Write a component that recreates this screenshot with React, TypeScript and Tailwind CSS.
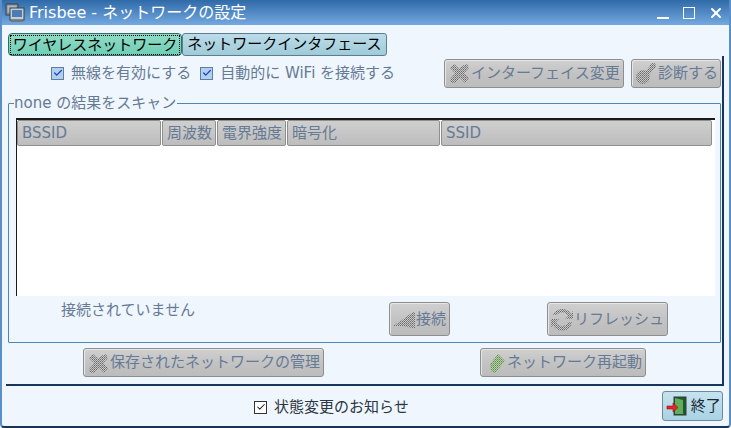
import React from 'react';
import { X, Check } from 'lucide-react';

const font = "font-['DejaVu_Sans','Noto_Sans_CJK_JP',sans-serif]";

const Hatch: React.FC<{ kind: 'tools' | 'tools2' | 'gear' | 'plug' | 'refresh' | 'arrow' }> = ({ kind }) => (
  <svg width="24" height="24" viewBox="0 0 24 24" className="shrink-0">
    <defs>
      <pattern id={`h-${kind}`} width="2" height="2" patternUnits="userSpaceOnUse">
        <rect width="2" height="2" fill={kind === 'arrow' ? '#b7d0a8' : '#c8c8c8'} />
        <rect width="1" height="1" fill={kind === 'arrow' ? '#5f8a55' : '#6a6a6a'} />
        <rect x="1" y="1" width="1" height="1" fill={kind === 'arrow' ? '#7fa36f' : '#858585'} />
      </pattern>
    </defs>
    {(kind === 'tools' || kind === 'tools2') && (
      <g fill={`url(#h-${kind})`}>
        <path d="M3 7 L7 3 L22 17 L18 22 Z" />
        <path d="M3 18 L15 5 L20 3 L22 7 L8 22 L4 22 Z" />
      </g>
    )}
    {kind === 'gear' && (
      <g fill={`url(#h-${kind})`}>
        <circle cx="9" cy="16" r="7" />
        <circle cx="19" cy="5" r="3" />
        <path d="M11 11 L16 5 L20 8 L14 15 Z" />
      </g>
    )}
    {kind === 'plug' && <path d="M1 19 L10 13 L21 5 L23 5 L23 21 L21 21 L10 19 Z" fill={`url(#h-${kind})`} />}
    {kind === 'refresh' && (
      <path
        d="M12 2 A10 10 0 0 1 21 7 L23 4 L23 12 L15 12 L18 9 A6.5 6.5 0 0 0 7 8 L3 8 A10 10 0 0 1 12 2 Z M1 12 L9 12 L6 15 A6.5 6.5 0 0 0 18 15 L22 15 A10 10 0 0 1 3 18 L1 21 Z"
        fill={`url(#h-${kind})`}
      />
    )}
    {kind === 'arrow' && <path d="M15 3 L22 10 L12 22 L8 20 L7 13 Z" fill={`url(#h-${kind})`} />}
  </svg>
);

const GrayButton: React.FC<{ label: string; icon: React.ReactNode; className: string }> = ({ label, icon, className }) => (
  <div
    className={`flex items-center rounded-[3px] border border-[#8e8e8e] bg-gradient-to-b from-[#d0d0d0] via-[#c3c3c3] to-[#bcbcbc] pl-[2px] text-[15px] text-[#667a94] shadow-[inset_1px_1px_0_#e6e6e6] ${className}`}
  >
    {icon}
    <span className="whitespace-nowrap">{label}</span>
  </div>
);

const Header: React.FC<{ label: string; className: string }> = ({ label, className }) => (
  <div
    className={`flex h-[26px] items-center rounded-[2px] border border-[#8f8f8f] bg-gradient-to-b from-[#cfcfcf] to-[#bdbdbd] pl-[4px] text-[15px] text-[#667a94] ${className}`}
  >
    <span className="whitespace-nowrap">{label}</span>
  </div>
);

const BlueCheck: React.FC = () => (
  <span className="flex h-[13px] w-[13px] items-center justify-center border border-[#5a7fa8] bg-[#b3cfe9]">
    <Check size={10} strokeWidth={3} className="text-[#1a3fd8]" />
  </span>
);

const App: React.FC = () => (
  <div className={`flex h-[428px] w-[731px] flex-col overflow-hidden rounded-b-[4px] border-x-2 border-b-2 border-x-[#5b8fc7] border-b-[#17365c] bg-[#eff6fe] ${font}`}>
    {/* Title bar */}
    <div className="-mx-[2px] flex h-[25px] shrink-0 items-center bg-gradient-to-b from-[#2f6aa8] to-[#74a9e0] pl-[5px] pr-[7px] text-white">
      <svg width="21" height="21" viewBox="0 0 21 21" className="shrink-0">
        <rect x="1" y="2" width="12" height="11" fill="#7f8c99" stroke="#39424c" />
        <rect x="2.5" y="3.5" width="9" height="7" fill="#aeb8c2" />
        <rect x="5" y="6" width="14" height="12" fill="#c4ccd4" stroke="#39424c" />
        <rect x="7" y="8" width="10" height="7" fill="#4b7cb4" />
        <rect x="6" y="18" width="12" height="2" fill="#6d7882" />
      </svg>
      <span className="ml-[3px] text-[16px] whitespace-nowrap">Frisbee - ネットワークの設定</span>
      <div className="ml-auto flex items-center">
        <span className="mt-[10px] h-[2px] w-[12px] bg-white" />
        <span className="ml-[14px] h-[12px] w-[12px] border-[1.5px] border-white" />
        <X size={16} strokeWidth={3} className="ml-[13px]" />
      </div>
    </div>

    <div className="flex flex-1 flex-col pl-[4px] pr-[5px]">
      {/* Tabs */}
      <div className="mt-[8px] ml-[2px] flex h-[23px] shrink-0 text-[15px] text-black">
        <div className="flex w-[174px] items-center justify-center rounded-[4px] border border-[#2d6f70] bg-gradient-to-b from-[#8fdcc6] to-[#6fcdb4]">
          <span className="whitespace-nowrap border border-dotted border-black px-[2px] leading-[18px]">ワイヤレスネットワーク</span>
        </div>
        <div className="flex w-[205px] items-center justify-center rounded-[3px] border border-[#5c7f90] bg-gradient-to-b from-[#bcdcea] to-[#9fcbd8]">
          <span className="whitespace-nowrap">ネットワークインタフェース</span>
        </div>
      </div>

      {/* Tab page */}
      <div className="flex h-[330px] shrink-0 flex-col border-r-2 border-b-2 border-r-[#17365c] border-b-[#17365c]">
        <div className="mt-[2px] flex h-[30px] shrink-0 items-center pr-[1px] text-[15px] text-[#667a94]">
          <div className="ml-[45px] flex items-center gap-[7px]">
            <BlueCheck />
            <span className="whitespace-nowrap">無線を有効にする</span>
          </div>
          <div className="ml-[9px] flex items-center gap-[7px]">
            <BlueCheck />
            <span className="whitespace-nowrap">自動的に WiFi を接続する</span>
          </div>
          <GrayButton label="インターフェイス変更" icon={<Hatch kind="tools" />} className="ml-auto h-[29px] w-[180px]" />
          <GrayButton label="診断する" icon={<Hatch kind="gear" />} className="ml-[7px] h-[29px] w-[90px]" />
        </div>

        {/* Group box */}
        <div className="relative mt-[15px] mr-[1px] ml-[2px] flex h-[240px] shrink-0 flex-col rounded-[1px] border border-[#4d87b8] pl-[7px] pr-[5px] pt-[14px]">
          <span className="absolute -top-[10px] left-[5px] whitespace-nowrap bg-[#eff6fe] pr-[1px] text-[15px] leading-[19px] text-[#667a94]">none の結果をスキャン</span>
          <div className="h-[178px] shrink-0 border-t-2 border-l border-t-[#1a1a1a] border-l-[#1a1a1a] bg-white pr-[3px]">
            <div className="flex gap-[1px]">
              <Header label="BSSID" className="w-[144px]" />
              <Header label="周波数" className="w-[54px]" />
              <Header label="電界強度" className="w-[69px]" />
              <Header label="暗号化" className="w-[153px]" />
              <Header label="SSID" className="flex-1" />
            </div>
          </div>
          <div className="flex flex-1 items-start pt-[6px]">
            <span className="ml-[45px] -mt-[1px] whitespace-nowrap text-[15px] leading-[18px] text-[#667a94]">接続されていません</span>
            <GrayButton label="接続" icon={<Hatch kind="plug" />} className="ml-[194px] h-[34px] w-[61px]" />
            <GrayButton label="リフレッシュ" icon={<Hatch kind="refresh" />} className="ml-[97px] h-[34px] w-[121px]" />
          </div>
        </div>

        <div className="mt-[5px] flex shrink-0">
          <GrayButton label="保存されたネットワークの管理" icon={<Hatch kind="tools2" />} className="ml-[77px] h-[29px] w-[241px]" />
          <GrayButton label="ネットワーク再起動" icon={<Hatch kind="arrow" />} className="ml-[156px] h-[29px] w-[166px]" />
        </div>
      </div>

      {/* Bottom row */}
      <div className="flex flex-1 items-start text-[15px] text-[#2b3742]">
        <div className="ml-[248px] mt-[12px] flex items-center gap-[7px]">
          <span className="flex h-[13px] w-[13px] items-center justify-center border border-[#333] bg-white">
            <Check size={10} strokeWidth={2.5} className="text-[#222]" />
          </span>
          <span className="whitespace-nowrap leading-[18px]">状態変更のお知らせ</span>
        </div>
        <div className="ml-[253px] mt-[5px] flex h-[30px] w-[61px] items-center rounded-[3px] border border-[#6f8a9a] bg-gradient-to-b from-[#c6e2ef] to-[#a9d2e4] pl-[3px] text-[#1c2a36]">
          <svg width="22" height="22" viewBox="0 0 22 22" className="shrink-0">
            <rect x="8" y="2" width="12" height="18" fill="#1f5a2a" stroke="#3b3b3b" />
            <path d="M9 3 L17 5 L17 19 L9 19 Z" fill="#5fae5a" />
            <path d="M1 11 L7 11 L7 8 L12 12.5 L7 17 L7 14 L1 14 Z" fill="#e8262a" stroke="#8f1010" strokeWidth="0.6" />
          </svg>
          <span className="ml-[3px] whitespace-nowrap">終了</span>
        </div>
      </div>
    </div>
  </div>
);

export default App;
